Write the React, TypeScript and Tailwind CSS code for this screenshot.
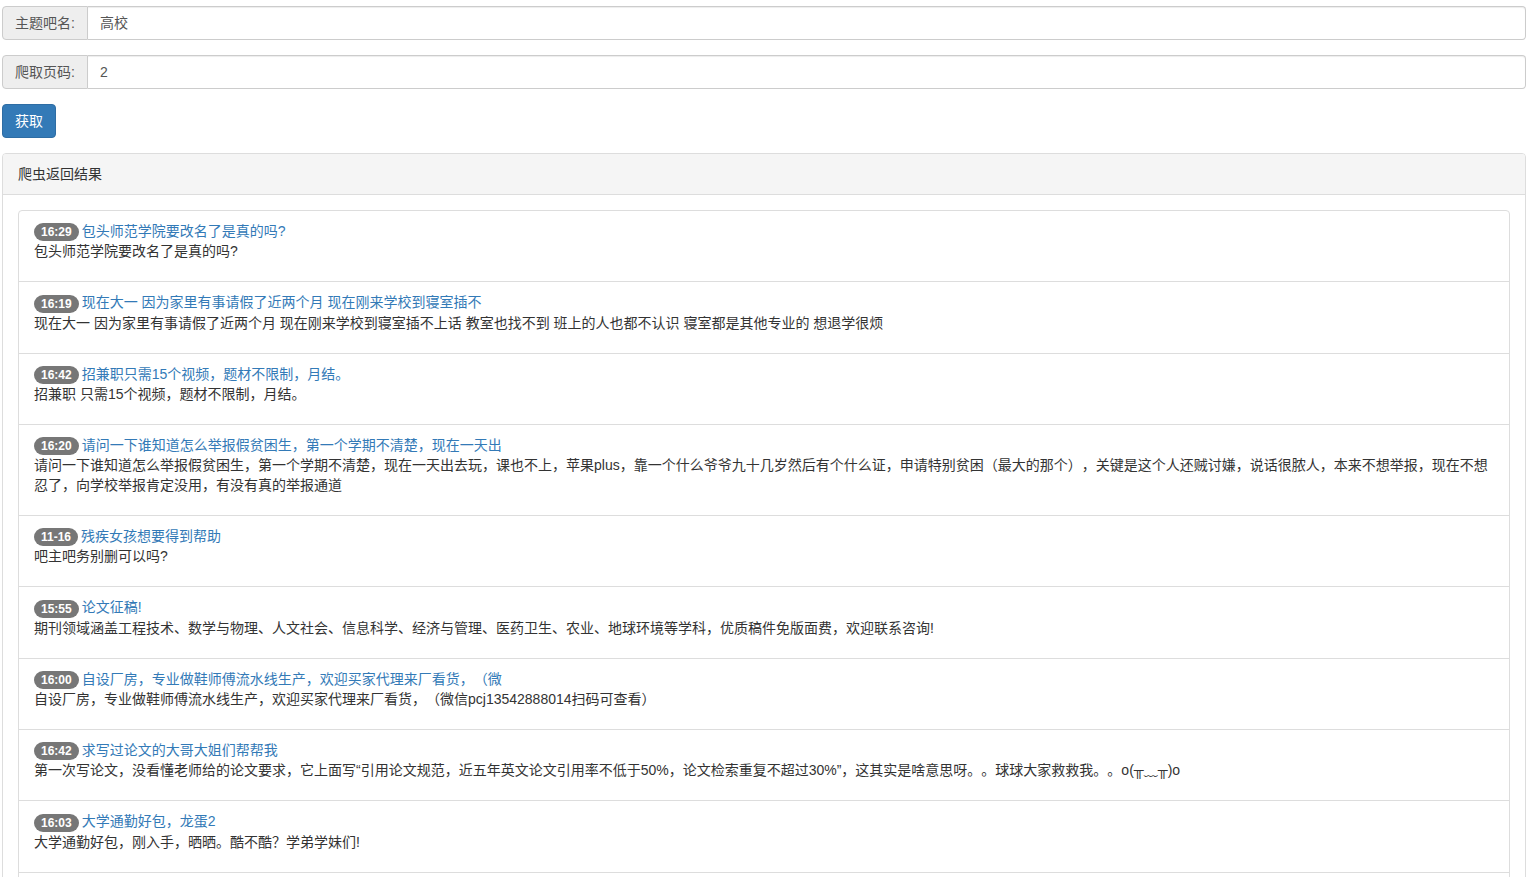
import React from "react";

const items: { t: string; title: string; body: string }[] = [
  { t: "16:29", title: "包头师范学院要改名了是真的吗?", body: "包头师范学院要改名了是真的吗?" },
  {
    t: "16:19",
    title: "现在大一 因为家里有事请假了近两个月 现在刚来学校到寝室插不",
    body: "现在大一 因为家里有事请假了近两个月 现在刚来学校到寝室插不上话 教室也找不到 班上的人也都不认识 寝室都是其他专业的 想退学很烦",
  },
  { t: "16:42", title: "招兼职只需15个视频，题材不限制，月结。", body: "招兼职 只需15个视频，题材不限制，月结。" },
  {
    t: "16:20",
    title: "请问一下谁知道怎么举报假贫困生，第一个学期不清楚，现在一天出",
    body: "请问一下谁知道怎么举报假贫困生，第一个学期不清楚，现在一天出去玩，课也不上，苹果plus，靠一个什么爷爷九十几岁然后有个什么证，申请特别贫困（最大的那个），关键是这个人还贼讨嫌，说话很脓人，本来不想举报，现在不想忍了，向学校举报肯定没用，有没有真的举报通道",
  },
  { t: "11-16", title: "残疾女孩想要得到帮助", body: "吧主吧务别删可以吗?" },
  {
    t: "15:55",
    title: "论文征稿!",
    body: "期刊领域涵盖工程技术、数学与物理、人文社会、信息科学、经济与管理、医药卫生、农业、地球环境等学科，优质稿件免版面费，欢迎联系咨询!",
  },
  {
    t: "16:00",
    title: "自设厂房，专业做鞋师傅流水线生产，欢迎买家代理来厂看货，（微",
    body: "自设厂房，专业做鞋师傅流水线生产，欢迎买家代理来厂看货，（微信pcj13542888014扫码可查看）",
  },
  {
    t: "16:42",
    title: "求写过论文的大哥大姐们帮帮我",
    body: "第一次写论文，没看懂老师给的论文要求，它上面写“引用论文规范，近五年英文论文引用率不低于50%，论文检索重复不超过30%”，这其实是啥意思呀。。球球大家救救我。。o(╥﹏╥)o",
  },
  { t: "16:03", title: "大学通勤好包，龙蛋2", body: "大学通勤好包，刚入手，晒晒。酷不酷？学弟学妹们!" },
  { t: "16:10", title: "高校", body: "高校" },
];

const font = { fontFamily: '"Liberation Sans", "Noto Sans CJK SC", sans-serif' };

export default function App() {
  return (
    <div
      className="h-[877px] overflow-hidden bg-white text-[14px] leading-[20px] text-[#333] [text-spacing-trim:space-all]"
      style={font}
    >
      <div className="ml-[2px] mr-[6px] pt-[6px]">
        <div className="mb-[15px] flex h-[34px]">
          <span className="flex items-center rounded-l-[4px] border border-[#ccc] bg-[#eee] px-[12px] text-[#555]">主题吧名:</span>
          <input
            readOnly
            value="高校"
            className="flex-1 rounded-r-[4px] border border-l-0 border-[#ccc] px-[12px] text-[#555] shadow-[inset_0_1px_1px_rgba(0,0,0,0.075)] outline-none"
            style={font}
          />
        </div>
        <div className="mb-[15px] flex h-[34px]">
          <span className="flex items-center rounded-l-[4px] border border-[#ccc] bg-[#eee] px-[12px] text-[#555]">爬取页码:</span>
          <input
            readOnly
            value="2"
            className="flex-1 rounded-r-[4px] border border-l-0 border-[#ccc] px-[12px] text-[#555] shadow-[inset_0_1px_1px_rgba(0,0,0,0.075)] outline-none"
            style={font}
          />
        </div>
        <div className="mb-[15px]">
          <button
            className="h-[34px] rounded-[4px] border border-[#2e6da4] bg-[#337ab7] px-[12px] text-white"
            style={font}
          >
            获取
          </button>
        </div>
        <div className="rounded-[4px] border border-[#ddd]">
          <div className="rounded-t-[3px] border-b border-[#ddd] bg-[#f5f5f5] px-[15px] py-[10px]">爬虫返回结果</div>
          <div className="p-[15px]">
            <div className="flex flex-col">
              {items.map((it, i) => (
                <div
                  key={i}
                  className={`-mb-px border border-[#ddd] px-[15px] py-[10px] ${i === 0 ? "rounded-t-[4px]" : ""}`}
                >
                  <p className="mb-[10px]">
                    <span className="mr-[3px] inline-block rounded-[10px] bg-[#777] px-[7px] py-[3px] align-middle text-[12px] font-bold leading-none text-white">
                      {it.t}
                    </span>
                    <a className="text-[#337ab7]">{it.title}</a>
                    <br />
                    {it.body}
                  </p>
                </div>
              ))}
            </div>
          </div>
        </div>
      </div>
    </div>
  );
}
